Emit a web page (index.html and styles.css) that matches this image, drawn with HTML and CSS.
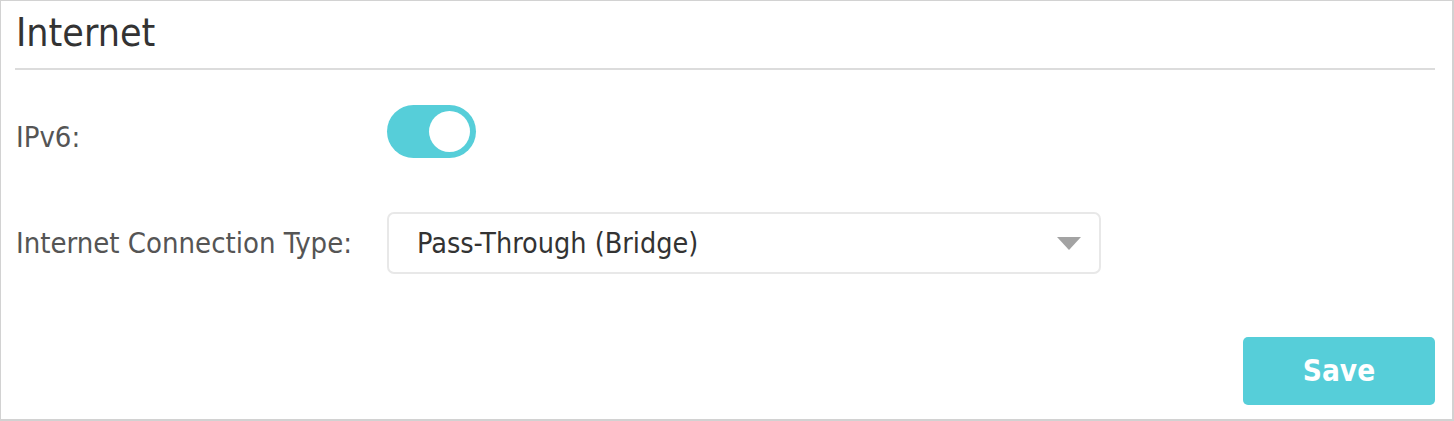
FILE: index.html
```html
<!DOCTYPE html>
<html>
<head>
<meta charset="utf-8">
<link rel="stylesheet" href="styles.css">
</head>
<body>
<div class="panel">
  <h1 class="title">Internet</h1>
  <div class="divider"></div>
  <div class="row row-ipv6">
    <div class="label">IPv6:</div>
    <div class="toggle"><span class="knob"></span></div>
  </div>
  <div class="row row-type">
    <div class="label">Internet Connection Type:</div>
    <div class="select">
      <span class="select-text">Pass-Through (Bridge)</span>
      <span class="arrow"></span>
    </div>
  </div>
  <div class="actions">
    <button class="save">Save</button>
  </div>
</div>
</body>
</html>
```

FILE: styles.css
```css
* { box-sizing: border-box; }
html, body { margin: 0; padding: 0; background: #fff; }
body { font-family: "DejaVu Sans", sans-serif; font-stretch: condensed; }
.panel {
  width: 1454px;
  height: 421px;
  border: 2px solid #d2d2d2;
  border-left-width: 1px;
  border-top-width: 1px;
  padding: 0 17px 0 14px;
  display: flex;
  flex-direction: column;
}
.title {
  margin: 0;
  height: 67px;
  padding-top: 12px;
  padding-left: 1px;
  font-weight: normal;
  font-size: 39px;
  line-height: 40px;
  color: #333;
}
.divider {
  height: 2px;
  background: #dcdcdc;
}
.row {
  display: grid;
  grid-template-columns: 371px 1fr;
  align-items: center;
  padding-left: 1px;
}
.row-ipv6 { margin-top: 35px; height: 53px; }
.row-type { margin-top: 54px; height: 62px; }
.label {
  font-size: 29px;
  color: #555;
  line-height: 30px;
}
.row-ipv6 .label { padding-top: 10px; }
.toggle {
  width: 89px;
  height: 53px;
  border-radius: 27px;
  background: #56ced9;
  position: relative;
}
.knob {
  position: absolute;
  top: 6px;
  left: 42px;
  width: 41px;
  height: 41px;
  border-radius: 50%;
  background: #fff;
}
.select {
  width: 714px;
  height: 62px;
  border: 2px solid #e8e8e8;
  border-radius: 7px;
  display: flex;
  align-items: center;
  justify-content: space-between;
  padding: 0 18px 0 28px;
}
.select-text {
  font-size: 28.5px;
  color: #333;
}
.arrow {
  width: 0;
  height: 0;
  border-left: 12px solid transparent;
  border-right: 12px solid transparent;
  border-top: 13px solid #a3a3a3;
}
.actions {
  display: flex;
  justify-content: flex-end;
  margin-top: 63px;
}
.save {
  width: 192px;
  height: 68px;
  border: none;
  border-radius: 5px;
  background: #56ced9;
  color: #fff;
  font-family: "DejaVu Sans", sans-serif;
  font-stretch: condensed;
  font-weight: bold;
  font-size: 29.5px;
  padding: 0;
}
```
